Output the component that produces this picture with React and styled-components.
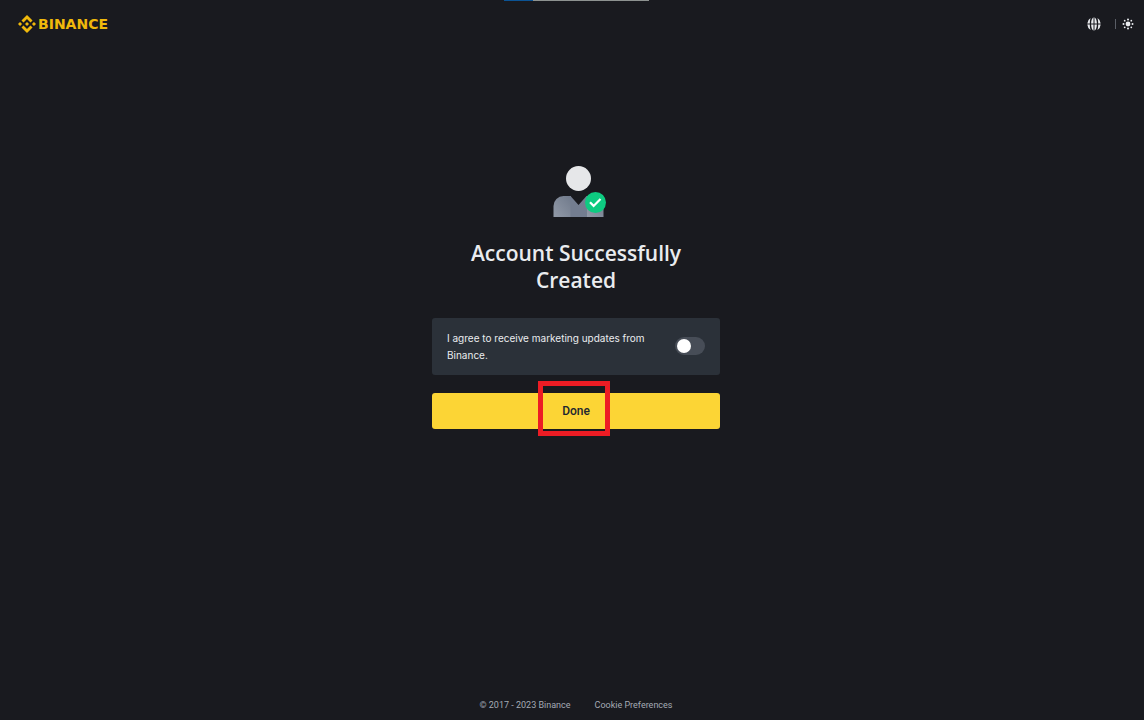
import React from 'react'
import styled, { createGlobalStyle } from 'styled-components'

const App = () => {
  return (
    <>
      <GlobalStyle />
      <Page>
        <LoadingBar />
        <Header>
          <Logo href='#' aria-label='Binance'>
            <LogoMark />
            BINANCE
          </Logo>
          <Tools>
            <IconButton type='button' aria-label='Language'>
              <GlobeIcon />
            </IconButton>
            <Divider />
            <IconButton type='button' aria-label='Theme'>
              <SunIcon />
            </IconButton>
          </Tools>
        </Header>
        <Main>
          <Content>
            <AccountIcon />
            <Title>Account Successfully Created</Title>
            <Consent>
              <label htmlFor='marketing'>
                I agree to receive marketing updates from Binance.
              </label>
              <Switch id='marketing' type='checkbox' />
            </Consent>
            <Action>
              <DoneButton type='button'>Done</DoneButton>
              <Highlight />
            </Action>
          </Content>
        </Main>
        <Footer>
          <span>© 2017 - 2023 Binance</span>
          <a href='#'>Cookie Preferences</a>
        </Footer>
      </Page>
    </>
  )
}

const LogoMark = () => (
  <svg width='18' height='18' viewBox='0 0 126.6 126.6' fill='currentColor'>
    <path d='M38.7 53.2l24.6-24.6 24.6 24.6 14.3-14.3L63.3 0 24.4 38.9z' />
    <path d='M0 63.3L14.3 49l14.3 14.3-14.3 14.3z' />
    <path d='M38.7 73.4L63.3 98l24.6-24.6 14.3 14.3-38.9 38.9-38.9-38.9z' />
    <path d='M98 63.3L112.3 49l14.3 14.3-14.3 14.3z' />
    <path d='M63.3 48.8l14.5 14.5-14.5 14.5-14.5-14.5z' />
  </svg>
)

const GlobeIcon = () => (
  <svg width='14' height='14' viewBox='0 0 14 14' fill='currentColor'>
    <path d='M3.500 1A7 7 0 0 0 .3 6.400h2.500C2.800 4.200 3 2.400 3.500 1z' />
    <path d='M.3 7.600A7 7 0 0 0 3.500 13c-.5-1.400-.7-3.200-.7-5.400z' />
    <path d='M10.500 1a7 7 0 0 1 3.200 5.400h-2.500c0-2.200-.2-4-.7-5.400z' />
    <path d='M13.700 7.600A7 7 0 0 1 10.500 13c.5-1.400.7-3.200.7-5.400z' />
    <path d='M6.500.2v6.200H4.100C4.200 3.500 5 1 6.500.2zM7.500.2v6.200h2.400C9.800 3.500 9 1 7.500.2z' />
    <path d='M6.500 13.800V7.600H4.100c.1 2.900.9 5.400 2.400 6.200zM7.500 13.800V7.600h2.400c-.1 2.900-.9 5.400-2.400 6.200z' />
  </svg>
)

const SunIcon = () => (
  <svg width='12' height='12' viewBox='0 0 12 12' fill='currentColor'>
    <circle cx='6' cy='6' r='2.400' />
    <circle cx='6' cy='1.500' r='1' />
    <circle cx='6' cy='10.500' r='1' />
    <circle cx='1.500' cy='6' r='1' />
    <circle cx='10.500' cy='6' r='1' />
    <circle cx='2.700' cy='2.700' r='.9' />
    <circle cx='9.300' cy='2.700' r='.9' />
    <circle cx='2.700' cy='9.300' r='.9' />
    <circle cx='9.300' cy='9.300' r='.9' />
  </svg>
)

const AccountIcon = () => (
  <svg width='64' height='64' viewBox='0 0 64 64' aria-hidden='true'>
    <defs>
      <linearGradient id='body' x1='0' y1='1' x2='1' y2='0'>
        <stop offset='0' stopColor='#929aa8' />
        <stop offset='1' stopColor='#707a8b' />
      </linearGradient>
    </defs>
    <circle cx='34.500' cy='20.500' r='12.500' fill='#e6e7e9' />
    <path d='M9.500 59V48a10 10 0 0 1 10-10H27v21z' fill='url(#body)' />
    <path d='M26.500 38l8 9 8-9H43v21H26.500z' fill='#737d90' />
    <path d='M43 38h7a10 10 0 0 1 9.500 10v11H43z' fill='url(#body)' />
    <circle cx='51.500' cy='44.500' r='10.500' fill='#0ecb81' />
    <path
      d='M46 44.300l3.600 3.600 6.900-7'
      fill='none'
      stroke='#fff'
      strokeWidth='2.200'
    />
  </svg>
)

const GlobalStyle = createGlobalStyle`
  * {
    box-sizing: border-box;
  }
  body {
    margin: 0;
    background: #191a1f;
    color: #eaecef;
    font-family: Roboto, sans-serif;
  }
  a {
    color: inherit;
    text-decoration: none;
  }
`

const Page = styled.div`
  position: relative;
  display: flex;
  flex-direction: column;
  min-height: 100vh;
`

const LoadingBar = styled.div`
  position: absolute;
  top: 0;
  left: 8px;
  right: 0;
  width: 145px;
  height: 1px;
  margin: 0 auto;
  background: linear-gradient(to right, #0b5394 20%, #8d9290 20%);
`

const Header = styled.header`
  display: flex;
  align-items: center;
  justify-content: space-between;
  height: 48px;
  padding: 0 10px 0 18px;
`

const Logo = styled.a`
  display: flex;
  align-items: center;
  gap: 2px;
  color: #f0b90b;
  font: 700 14px/18px 'DejaVu Sans', sans-serif;
`

const Tools = styled.div`
  display: flex;
  align-items: center;
`

const IconButton = styled.button`
  display: flex;
  padding: 0;
  border: 0;
  background: none;
  color: #eaecef;
  cursor: pointer;
`

const Divider = styled.span`
  width: 1px;
  height: 10px;
  margin: 0 6px 0 14px;
  background: #5a5e66;
`

const Main = styled.main`
  flex: 1;
  display: flex;
  justify-content: center;
  padding: 110px 0 40px 8px;
`

const Content = styled.div`
  display: flex;
  flex-direction: column;
  align-items: center;
  width: 100%;
  max-width: 288px;
`

const Title = styled.h1`
  margin: 18px 0 24px;
  padding: 0 32px;
  font: 600 21px/27px 'Open Sans', sans-serif;
  text-align: center;
`

const Consent = styled.div`
  display: flex;
  align-items: flex-start;
  gap: 24px;
  width: 100%;
  padding: 12px 15px 11px;
  border-radius: 3px;
  background: #2b3139;
  font: 10px/17px Inter, sans-serif;
  label {
    flex: 1;
  }
`

const Switch = styled.input`
  appearance: none;
  display: flex;
  align-items: center;
  width: 30px;
  height: 18px;
  margin: 7px 0 0;
  padding: 0 2px;
  border-radius: 9px;
  background: #474d57;
  cursor: pointer;
  &::before {
    content: '';
    width: 14px;
    height: 14px;
    border-radius: 50%;
    background: #fff;
  }
  &:checked {
    justify-content: flex-end;
    background: #0ecb81;
  }
`

const Action = styled.div`
  position: relative;
  width: 100%;
  margin-top: 18px;
`

const DoneButton = styled.button`
  display: block;
  width: 100%;
  height: 36px;
  border: 0;
  border-radius: 3px;
  background: #fcd535;
  color: #202630;
  font: 500 12px/18px Roboto, sans-serif;
  cursor: pointer;
`

const Highlight = styled.div`
  position: absolute;
  top: -12px;
  left: 106px;
  width: 72px;
  height: 55px;
  border: 5px solid #ed1c24;
  pointer-events: none;
`

const Footer = styled.footer`
  display: flex;
  justify-content: center;
  gap: 24px;
  padding: 0 0 8px 8px;
  color: #a4aab5;
  font-size: 9px;
  line-height: 14px;
`

export default App
